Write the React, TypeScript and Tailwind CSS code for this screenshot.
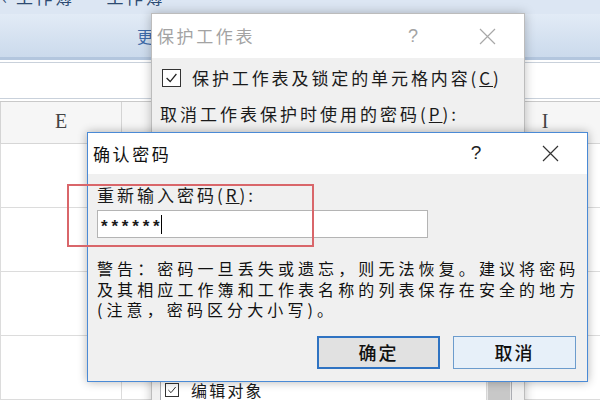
import React from "react";

const listItems = [
  "选定锁定单元格",
  "选定未锁定的单元格",
  "设置单元格格式",
  "设置列格式",
  "设置行格式",
  "插入列",
  "插入行",
  "插入超链接",
  "删除列",
  "删除行",
  "排序",
  "使用自动筛选",
  "使用数据透视表和数据透视图",
  "编辑对象",
  "编辑方案",
];

const columns = ["E", "F", "G", "H", "I"];

function CheckBox({ size = "w-[19px] h-[18px]" }: { size?: string }) {
  return (
    <div className={`${size} shrink-0 border border-[#333] bg-white flex items-center justify-center`}>
      <svg viewBox="0 0 18 18" className="w-full h-full">
        <path d="M3.5 9 L7.5 13 L14.5 4.5" fill="none" stroke="#222" strokeWidth="1.4" />
      </svg>
    </div>
  );
}

function CloseIcon({ color }: { color: string }) {
  return (
    <svg width="17" height="17" viewBox="0 0 17 17">
      <path d="M1 1 L16 16 M16 1 L1 16" stroke={color} strokeWidth="1.2" fill="none" />
    </svg>
  );
}

export default function App() {
  return (
    <div className="relative w-[600px] h-[400px] overflow-hidden bg-white font-['Noto_Sans_CJK_SC',sans-serif] text-[#1a1a1a]">
      {/* Excel window behind */}
      <div className="flex flex-col h-full">
        <div className="h-[14px] bg-[#dce6f3] overflow-hidden">
          <div className="-mt-[13px] pl-[2px] text-[17px] tracking-[2.5px] text-[#2d4b72] whitespace-nowrap leading-[20px]">
            ‹ 工作簿 · 工作簿
          </div>
        </div>
        <div className="h-[43px] bg-gradient-to-b from-[#e2ebf6] to-[#cbdaec] flex items-center pl-[137px]">
          <span className="text-[16px] text-[#3e6aa8] tracking-[2px] leading-none">更改</span>
        </div>
        <div className="h-[3px] bg-[#b3c6de]" />
        <div className="h-[37px] mt-[2px] bg-white border-y border-[#c9d1db]" />
        <div className="h-[2px] bg-white" />
        <div className="h-[43px] flex bg-[#f6f6f6] border-t border-[#c9c9c9] border-b border-b-[#d6d6d6]">
          <div className="w-[12px] border-r border-[#d4d4d4]" />
          {columns.map((c) => (
            <div
              key={c}
              className="w-[121px] shrink-0 border-r border-[#d4d4d4] flex items-center justify-center pb-[3px] font-['Liberation_Serif',serif] text-[20px] text-[#444]"
            >
              {c}
            </div>
          ))}
        </div>
        {[0, 1, 2, 3].map((r) => (
          <div key={r} className="h-[64px] shrink-0 flex border-b border-[#dcdcdc]">
            <div className="w-[12px] border-r border-[#dcdcdc]" />
            {columns.map((c) => (
              <div key={c} className="w-[121px] shrink-0 border-r border-[#dcdcdc]" />
            ))}
          </div>
        ))}
      </div>

      {/* 保护工作表 dialog (inactive) */}
      <div className="absolute left-[151px] top-[13px] w-[374px] h-[420px] border border-[#bcbcbc] shadow-[0_0_10px_rgba(0,0,0,0.25)] flex flex-col bg-[#f0f0f0]">
        <div className="h-[44px] bg-white flex items-center shrink-0">
          <div className="flex-1 pl-[5px] text-[17px] tracking-[2.6px] text-[#a3a3a3]">保护工作表</div>
          <div className="w-[74px] text-center text-[18px] text-[#a3a3a3] font-['Liberation_Sans',sans-serif]">?</div>
          <div className="w-[74px] flex justify-center">
            <CloseIcon color="#a8a8a8" />
          </div>
        </div>
        <div className="flex flex-col">
          <div className="flex items-center pl-[10px] pt-[6px] gap-[11px] h-[28px] box-content">
            <CheckBox />
            <span className="text-[17px] tracking-[2.9px] whitespace-nowrap">
              保护工作表及锁定的单元格内容(<span className="underline">C</span>)
            </span>
          </div>
          <div className="pl-[8px] mt-[12px] h-[20px] leading-[20px] text-[17px] tracking-[3px] whitespace-nowrap">
            取消工作表保护时使用的密码(<span className="underline">P</span>):
          </div>
          <div className="ml-[8px] mt-[8px] w-[330px] h-[26px] bg-white border border-[#adadad]" />
          <div className="pl-[8px] mt-[10px] text-[17px] tracking-[2.4px] whitespace-nowrap">
            允许此工作表的所有用户进行(O):
          </div>
          <div className="ml-[8px] mt-[60px] w-[352px] h-[200px] bg-white border border-[#abadb3] flex overflow-hidden">
            <div className="flex-1 overflow-hidden">
              <div className="mt-[-135px] flex flex-col">
                {listItems.map((item) => (
                  <div key={item} className="h-[20px] shrink-0 flex items-center pl-[4px] gap-[12px]">
                    <CheckBox size="w-[14px] h-[14px]" />
                    <span className="text-[16px] tracking-[2.2px] whitespace-nowrap leading-none">{item}</span>
                  </div>
                ))}
              </div>
            </div>
            <div className="w-[25px] bg-[#e8e8e8] border-l border-[#d6d6d6] flex justify-center pt-[120px]">
              <div className="w-[22px] h-[80px] bg-[#c8c8c8]" />
            </div>
          </div>
        </div>
      </div>

      {/* 确认密码 dialog (active) */}
      <div className="absolute left-[87px] top-[132px] w-[501px] h-[250px] border border-[#4a8ad6] shadow-[0_0_9px_rgba(0,0,0,0.3)] flex flex-col bg-[#f0f0f0]">
        <div className="h-[41px] bg-white flex items-center shrink-0">
          <div className="flex-1 pl-[5px] text-[17px] tracking-[2.6px] text-[#111]">确认密码</div>
          <div className="w-[74px] text-center text-[19px] text-[#222] font-['Liberation_Sans',sans-serif]">?</div>
          <div className="w-[74px] flex justify-center">
            <CloseIcon color="#333" />
          </div>
        </div>
        <div className="flex-1 flex flex-col px-[9px]">
          <div className="mt-[11px] h-[20px] leading-[20px] text-[17px] tracking-[3px] whitespace-nowrap">
            重新输入密码(<span className="underline">R</span>):
          </div>
          <div className="mt-[5px] w-[331px] h-[28px] bg-white border border-[#b4b4b4] flex items-center pl-[3px]">
            <span className="font-['Liberation_Sans',sans-serif] text-[17px] font-bold tracking-[3.8px] leading-none pt-[4px]">******</span>
            <span className="w-[1px] h-[19px] bg-black -ml-[3px]" />
          </div>
          <div className="mt-[20px] text-[16px] leading-[20.5px] tracking-[4.1px] whitespace-nowrap text-[#111]">
            <div>警告：密码一旦丢失或遗忘，则无法恢复。建议将密码</div>
            <div>及其相应工作簿和工作表名称的列表保存在安全的地方</div>
            <div>(注意，密码区分大小写)。</div>
          </div>
          <div className="mt-[16px] flex justify-end gap-[13px] pr-[2px]">
            <button className="w-[123px] h-[33px] bg-[#e1e1e1] border-2 border-[#2f73c2] text-[18px] tracking-[2px] font-medium text-[#111]">
              确定
            </button>
            <button className="w-[123px] h-[33px] bg-[#e7f0f9] border border-[#6c9ccd] text-[18px] tracking-[2px] font-medium text-[#111]">
              取消
            </button>
          </div>
        </div>
      </div>

      {/* red annotation box */}
      <div className="absolute left-[67px] top-[184px] w-[247px] h-[63px] border-2 border-[#d9666a]" />
    </div>
  );
}
